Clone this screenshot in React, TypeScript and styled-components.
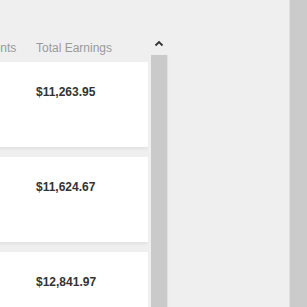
import React from 'react'
import styled, { createGlobalStyle } from 'styled-components'

const rows = ['$11,263.95', '$11,624.67', '$12,841.97']

export default function App() {
	return (
		<>
			<GlobalStyle />
			<Page>
				<TablePane>
					<Table>
						<HeaderRow>
							<HeadCell $width={73}>Payments</HeadCell>
							<HeadCell $width={120}>Total Earnings</HeadCell>
						</HeaderRow>
						<Body>
							{rows.map((earnings) => (
								<Card key={earnings}>
									<ValueCell $width={73} />
									<ValueCell $width={120}>{earnings}</ValueCell>
								</Card>
							))}
						</Body>
					</Table>
				</TablePane>
				<ScrollColumn>
					<Chevron>
						<svg width="10" height="7" viewBox="0 0 10 7">
							<path
								d="M1.5 5.5 L5 2 L8.5 5.5"
								fill="none"
								stroke="#333"
								strokeWidth="1.8"
							/>
						</svg>
					</Chevron>
					<Track />
				</ScrollColumn>
				<Gutter />
				<SideStrip />
			</Page>
		</>
	)
}

const GlobalStyle = createGlobalStyle`
	html, body {
		margin: 0;
		padding: 0;
		background: #efefef;
	}
	body {
		font-family: 'Liberation Sans', Arial, Helvetica, sans-serif;
		overflow: hidden;
	}
`

const Page = styled.div`
	display: flex;
	width: 307px;
	height: 307px;
	overflow: hidden;
	background: #efefef;
`

const TablePane = styled.div`
	width: 148px;
	flex-shrink: 0;
	overflow: hidden;
`

const Table = styled.div`
	margin-left: -37px;
	width: 185px;
`

const HeaderRow = styled.div`
	display: flex;
	height: 62px;
	padding-top: 41px;
	box-sizing: border-box;
`

const HeadCell = styled.div<{ $width: number }>`
	width: ${(p) => p.$width}px;
	flex-shrink: 0;
	font-size: 12px;
	line-height: 14px;
	color: #9a9a9a;
	white-space: nowrap;
`

const Body = styled.div`
	display: flex;
	flex-direction: column;
	gap: 10px;
`

const Card = styled.div`
	display: flex;
	height: 85px;
	padding-top: 23px;
	box-sizing: border-box;
	background: #fff;
	box-shadow: 0 2px 3px rgba(0, 0, 0, 0.06);
`

const ValueCell = styled.div<{ $width: number }>`
	width: ${(p) => p.$width}px;
	flex-shrink: 0;
	font-size: 12px;
	line-height: 14px;
	font-weight: bold;
	color: #333;
	white-space: nowrap;
`

const ScrollColumn = styled.div`
	width: 18px;
	margin-left: 2px;
	display: flex;
	flex-direction: column;
	align-items: center;
`

const Chevron = styled.div`
	height: 55px;
	display: flex;
	align-items: flex-start;
	justify-content: center;
	padding-top: 40px;
	box-sizing: border-box;
	margin-left: 0;
`

const Track = styled.div`
	flex: 1;
	width: 16px;
	background: #cacaca;
	box-shadow: 1px 0 1px rgba(0, 0, 0, 0.06);
`

const Gutter = styled.div`
	flex: 1;
`

const SideStrip = styled.div`
	width: 17px;
	background: #cbcbcb;
	border-left: 1px solid #e0e0e0;
`
